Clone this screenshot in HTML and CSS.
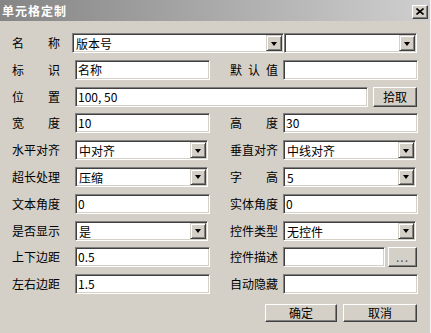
FILE: index.html
```html
<!DOCTYPE html>
<html lang="zh-CN">
<head>
<meta charset="UTF-8" />
<meta name="viewport" content="width=device-width, initial-scale=1" />
<title>单元格定制</title>
<link rel="stylesheet" href="styles.css">
</head>
<body>
  <div class="dialog">
    <div class="titlebar">
      <span class="title">单元格定制</span>
      <span class="close-btn">
        <svg width="8" height="7" viewBox="0 0 8 7"><path d="M0.5 0.5 L7.5 6.5 M7.5 0.5 L0.5 6.5" stroke="#000" stroke-width="1.6" fill="none"/></svg>
      </span>
    </div>

    <div class="form">
      <!-- 名称 -->
      <span class="lbl">名称</span>
      <div class="combo combo-name"><span class="combo-text">版本号</span><span class="arrow"></span></div>
      <div class="combo combo-extra"><span class="combo-text"></span><span class="arrow"></span></div>

      <span class="lbl">标识</span>
      <div class="field">名称</div>
      <span class="lbl">默认值</span>
      <div class="field"></div>

      <span class="lbl">位置</span>
      <div class="pos-row">
        <div class="field grow">100, 50</div>
        <button class="btn btn-pick">拾取</button>
      </div>

      <span class="lbl">宽度</span>
      <div class="field">10</div>
      <span class="lbl">高度</span>
      <div class="field">30</div>

      <span class="lbl">水平对齐</span>
      <div class="combo"><span class="combo-text">中对齐</span><span class="arrow"></span></div>
      <span class="lbl">垂直对齐</span>
      <div class="combo"><span class="combo-text">中线对齐</span><span class="arrow"></span></div>

      <span class="lbl">超长处理</span>
      <div class="combo"><span class="combo-text">压缩</span><span class="arrow"></span></div>
      <span class="lbl">字高</span>
      <div class="combo"><span class="combo-text">5</span><span class="arrow"></span></div>

      <span class="lbl">文本角度</span>
      <div class="field">0</div>
      <span class="lbl">实体角度</span>
      <div class="field">0</div>

      <span class="lbl">是否显示</span>
      <div class="combo"><span class="combo-text">是</span><span class="arrow"></span></div>
      <span class="lbl">控件类型</span>
      <div class="combo"><span class="combo-text">无控件</span><span class="arrow"></span></div>

      <span class="lbl">上下边距</span>
      <div class="field">0.5</div>
      <span class="lbl">控件描述</span>
      <div class="desc-row">
        <div class="field grow"></div>
        <button class="btn btn-more">...</button>
      </div>

      <span class="lbl">左右边距</span>
      <div class="field">1.5</div>
      <span class="lbl">自动隐藏</span>
      <div class="field"></div>
    </div>

    <div class="actions">
      <button class="btn btn-ok">确定</button>
      <button class="btn btn-cancel">取消</button>
    </div>
  </div>
</body>
</html>
```

FILE: styles.css
```css
body {
  margin: 0;
  background: #d4d0c8;
  font-family: "Noto Sans CJK SC", "Noto Sans", sans-serif;
  font-size: 12px;
  color: #000;
}
.dialog {
  width: 431px;
  height: 333px;
  box-sizing: border-box;
  background: #d4d0c8;
  border-right: 1px solid #f2f2f2;
  overflow: hidden;
}
.titlebar {
  height: 21px;
  background: linear-gradient(to right, #858585, #cfcfcf);
  display: flex;
  align-items: center;
  justify-content: space-between;
  padding: 0 2px 0 2px;
}
.title {
  color: #fff;
  font-weight: bold;
  letter-spacing: 1px;
  line-height: 14px;
}
.close-btn {
  width: 16px;
  height: 14px;
  box-sizing: border-box;
  background: #d4d0c8;
  border: 1px solid;
  border-color: #fff #404040 #404040 #fff;
  box-shadow: inset -1px -1px #808080;
  display: flex;
  align-items: center;
  justify-content: center;
  margin-top: 2px;
}
.close-btn svg {
  display: block;
}
.form {
  display: grid;
  grid-template-columns: 63px 155px 53px 135px;
  grid-auto-rows: 20px;
  row-gap: 6.8px;
  align-items: center;
  padding: 12px 0 0 12px;
}
.lbl {
  width: 48px;
  text-align: justify;
  text-align-last: justify;
  line-height: 14px;
  white-space: nowrap;
}
.field {
  width: 135px;
  height: 20px;
  box-sizing: border-box;
  background: #fff;
  border: 1px solid;
  border-color: #808080 #fff #fff #808080;
  box-shadow: inset 1px 1px #404040, inset -1px -1px #d4d0c8;
  padding: 1px 0 0 2px;
  line-height: 16px;
  white-space: nowrap;
}
.combo {
  width: 133px;
  height: 20px;
  box-sizing: border-box;
  background: #fff;
  border: 1px solid;
  border-color: #808080 #fff #fff #808080;
  box-shadow: inset 1px 1px #404040, inset -1px -1px #d4d0c8;
  padding: 1px;
  display: flex;
}
.combo-text {
  flex: 1;
  padding: 1px 0 0 2px;
  line-height: 15px;
}
.arrow {
  width: 16px;
  height: 16px;
  box-sizing: border-box;
  background: #d4d0c8;
  border: 1px solid;
  border-color: #d4d0c8 #404040 #404040 #d4d0c8;
  box-shadow: inset 1px 1px #fff, inset -1px -1px #808080;
  display: flex;
  align-items: center;
  justify-content: center;
}
.arrow::after {
  content: "";
  border-style: solid;
  border-width: 4px 3.5px 0 3.5px;
  border-color: #000 transparent transparent transparent;
  margin-top: 1px;
}
.combo-name {
  grid-column: 2 / 4;
  width: 212px;
  margin-left: -3px;
}
.combo-extra {
  margin-left: 1px;
}
.pos-row {
  grid-column: 2 / 5;
  width: 342px;
  display: flex;
  gap: 5px;
  align-items: center;
}
.desc-row {
  width: 134px;
  display: flex;
  gap: 3px;
  align-items: center;
}
.grow {
  flex: 1;
  width: auto;
}
.btn {
  font-family: inherit;
  font-size: 12px;
  color: #000;
  background: #d4d0c8;
  border: 1px solid;
  border-color: #fff #404040 #404040 #fff;
  box-shadow: inset -1px -1px #808080;
  padding: 0;
  line-height: 14px;
  box-sizing: border-box;
}
.btn-pick {
  width: 44px;
  height: 20px;
}
.btn-more {
  width: 29px;
  height: 20px;
  letter-spacing: 1px;
  color: #555;
}
.actions {
  display: flex;
  justify-content: flex-end;
  gap: 6px;
  padding: 10px 13px 0 0;
}
.btn-ok {
  width: 72px;
  height: 18px;
}
.btn-cancel {
  width: 74px;
  height: 18px;
}
```
